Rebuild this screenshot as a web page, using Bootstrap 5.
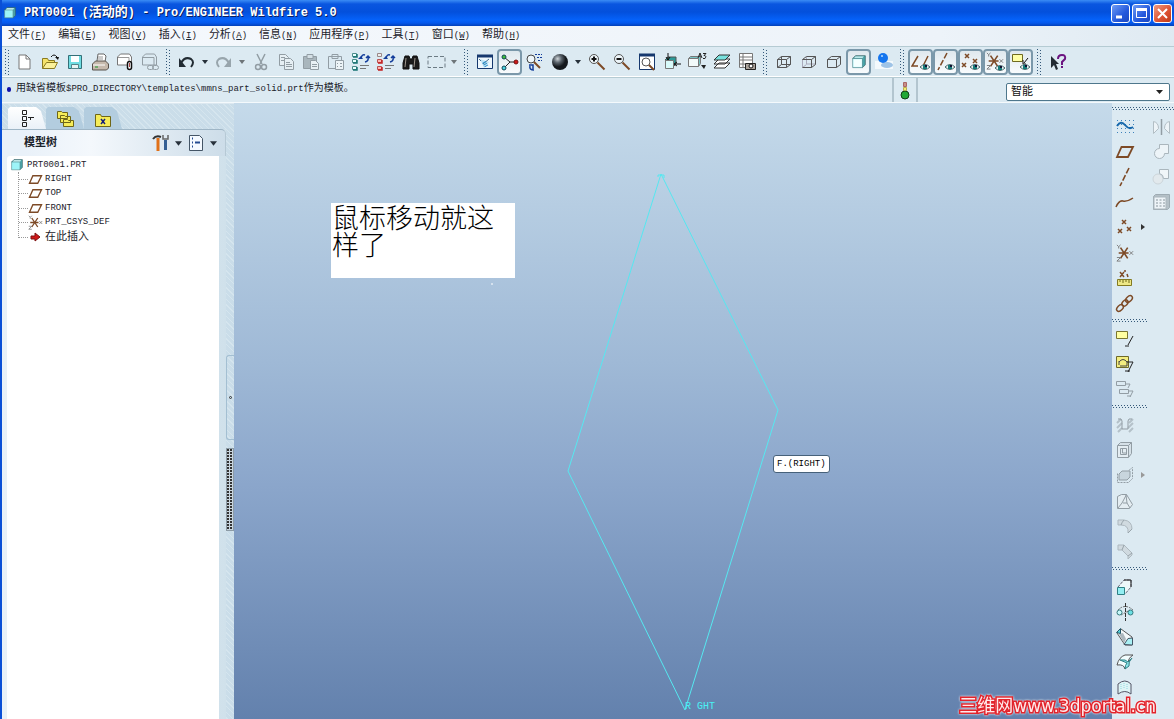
<!DOCTYPE html>
<html lang="zh-CN">
<head>
<meta charset="utf-8">
<meta name="viewport" content="width=device-width, initial-scale=1">
<title>PRT0001 (活动的) - Pro/ENGINEER Wildfire 5.0</title>
<link href="https://cdn.jsdelivr.net/npm/bootstrap@5.3.0/dist/css/bootstrap.min.css" rel="stylesheet">
<style>
:root{--face:#dceaf2;--ink:#1b222a;--brown:#7d4a26;--navy:#16386e;--dim:#9aa6ad}
body{font-family:"Liberation Mono","Noto Sans CJK SC",monospace;font-size:9px;line-height:14px;color:var(--ink);background:var(--face)}
.app{border-left:2px solid #0a4fd6}
.cjk{font-size:11px}
.cjk10{font-size:10px}
.titlebar{height:26px;padding:0 2px;background:linear-gradient(#3b8cf5 0,#0a56e0 4px,#0350dc 12px,#0562fa 20px,#0458ec 23px,#0340b8 26px);color:#fff}
.titlebar h1{font-size:12px;line-height:18px;text-shadow:1px 1px 0 #0a1f60}
.titlebar h1 span{font-size:13px}
.winbtn{width:19px;height:19px;padding:0;border:1px solid #fff;border-radius:3px;background:linear-gradient(135deg,#6f9cf5,#2358dc 60%,#1c48c0)}
.winbtn.closer{background:linear-gradient(135deg,#f09a80,#dc5030 60%,#bc3a18)}
.winbtns{gap:2px}
.winbtn svg,.tb svg,.side svg,.tabbtn svg,.tree svg,.drop svg{display:block}
.menubar{height:20px;padding-left:6px;gap:12px;background:linear-gradient(90deg,#f6f9fd,#edf3f9 80%,#dfeaf2)}
.menubar a{color:var(--ink);text-decoration:none;line-height:18px}
.toolbar{height:32px;border-top:1px solid #b5cbd3;border-bottom:1px solid #b5cbd3;box-shadow:inset 0 -1px #fff;padding-left:2px}
.tb,.drop{border:0;padding:0;background:none;width:25px;height:26px;display:flex;align-items:center;justify-content:center;color:#27303a}
.drop{width:12px}
.tb.on{border:2px solid #7b98aa;border-radius:4px;background:linear-gradient(#dfe8ee,#f8fbfd)}
.grip{width:4px;height:26px;margin:0 4px;background:repeating-linear-gradient(#35597a 0 1px,transparent 1px 3px) 0 0/1px 100% no-repeat,repeating-linear-gradient(transparent 0 1px,#35597a 1px 2px,transparent 2px 3px) 3px 0/1px 100% no-repeat}
.grip.lead-in{margin:0 3px 0 1px}
.msgbar{height:25px;border-bottom:1px solid #f4f9fc}
.msgbar p{padding:4px 0 0 5px}
.bullet{width:4px;height:5px;border-radius:2px;background:#1010a8;margin-right:5px}
.lamp{width:26px;border-left:2px solid #b3c5cf;border-right:2px solid #b3c5cf}
.filterbox{width:164px;height:18px;margin:5px 4px 0 88px;padding:0 20px 0 4px;font-size:11px;line-height:16px;color:#111;border:1px solid #4e778c;border-radius:2px;background-color:#fff;background-size:7px 4px;background-position:right 6px center;background-image:url("data:image/svg+xml,%3Csvg xmlns='http://www.w3.org/2000/svg' viewBox='0 0 7 4'%3E%3Cpath d='M0 0h7L3.500 4z' fill='%23222'/%3E%3C/svg%3E")}
.hatch{background:repeating-linear-gradient(45deg,#cadde9 0 3px,#d5e5ee 3px 4px)}
.treepane{width:232px;border-top:1px solid #dce8f0}
.treecard{width:224px;background:linear-gradient(90deg,#e9f1f8,#d0e1eb)}
.tabs{height:25px;padding:3px 0 0 6px}
.tabbtn{width:38px;height:22px;border:0;padding:0;background:#b3cddf;clip-path:polygon(2px 0,28px 0,33px 4px,38px 22px,0 22px,0 2px);display:flex;align-items:center;justify-content:center}
.tabbtn.cur{background:linear-gradient(#fff,#eaf1f8)}
.paneltop{height:27px;padding:0 6px 0 22px;border-top:1px solid #9fb6c6;border-right:1px solid #b6c9d5;border-top-right-radius:5px;background:linear-gradient(90deg,#e9f1f9 10%,#f4f8fc 40%,#cddde9)}
.paneltop .tb{width:23px}
.tree{background:#fff;margin:0 7px 0 5px;padding:2px 0 0 4px;border-top-left-radius:3px}
.tree ul{margin:0 0 0 7px;padding:0;border-left:1px dotted #999;height:66px}
.tree li{height:14px;display:flex;align-items:center;list-style:none}
.tree li.more{margin-bottom:1px}
.tree li::before{content:"";width:9px;border-top:1px dotted #999}
.tree li span{margin-left:2px}
.splitter{width:8px}
.splitter::before{content:"";height:62px}
.knob{height:85px;border:1px solid #a3bfd2;border-right:0;border-radius:3px 0 0 3px}
.knob i{width:3px;height:3px;border:1px solid #333;border-radius:2px}
.thumb{height:83px;margin-top:8px;border:1px solid #8c9ba6;background:repeating-linear-gradient(90deg,transparent 0 2px,#c9d6df 2px 3px),repeating-linear-gradient(#333 0 2px,#c9d6df 2px 3px)}
.view{background:linear-gradient(#c5daea,#9fb9d6 42%,#8ba6cb 62%,#6381ad)}
.sketch{left:0;top:0}
.note{left:97px;top:100px;width:184px;height:75px;background:#fff;color:#000;font-family:"Noto Sans CJK SC",sans-serif;font-size:27px;font-weight:300;line-height:27px;padding:0 1px}
.tip{left:539px;top:352px;padding:1px 3px;background:#fff;border:1px solid #46617a;border-radius:3px;color:#000}
.axisname{left:451px;top:597px;font-size:10px;color:#4af0f4;white-space:pre}
.side{width:62px}
.hgrip{height:3px;margin:4px 0;background:repeating-linear-gradient(90deg,#35597a 0 1px,transparent 1px 3px) 0 0/100% 1px no-repeat,repeating-linear-gradient(90deg,transparent 0 1px,#35597a 1px 2px,transparent 2px 3px) 0 2px/100% 1px no-repeat}
.side .tb{height:25px}
.side .c1{width:36px}
.side .pt{width:11px}
.mark3d{right:18px;bottom:1px;font-family:"DejaVu Sans","Noto Sans CJK SC",sans-serif;font-size:17px;line-height:24px;color:#ffe9ea;text-decoration:none;-webkit-text-stroke:3px #e2242c;paint-order:stroke fill;filter:drop-shadow(0 0 1px #fff)}
.mark3d span{font-size:18px}
svg{fill:none;stroke:#333}
.br{stroke:var(--brown)}
.gy{stroke:#929da4}
.nv{stroke:#123c9a}
</style>
</head>
<body>
<svg class="d-none">
<symbol id="eye" viewBox="0 0 10 8"><path d="M0 4Q5 -1 10 4Q5 9 0 4z" fill="#e6eeee" stroke="#46666a"/><path d="M3 2h4v4H3z" fill="#157a78" stroke="none"/><path d="M5 2h2v2H5z" fill="#113" stroke="none"/></symbol>
<symbol id="sheet" viewBox="0 0 20 20"><path d="M4 3h7l4 4v10H4z" fill="#fff" stroke="#777"/><path d="M11 3v4h4" stroke="#777"/></symbol>
<symbol id="dn" viewBox="0 0 6 4"><path d="M0 0h6L3 4z" stroke="none" fill="currentColor"/></symbol>
<symbol id="plane" viewBox="0 0 20 20"><path d="M6.500 5h11.500l-5 10h-11z" stroke-width="1.800" stroke="#7d4a26"/></symbol>
<symbol id="csys" viewBox="0 0 20 20"><path d="M3 10h11M5 4l8 12M13 4L5 16" stroke="#7d4a26" stroke-width="1.800"/><path d="M15 8l4 4M19 8l-4 4M1 1l2 2 2-2M3 3v2M1 15h4l-4 4h4" stroke="#777"/></symbol>
<symbol id="cube" viewBox="0 0 20 20"><path d="M1 5l4-4h14v13l-4 4z" fill="#4aa6aa" stroke="#345b60"/><path d="M1 5h14v13H1z" fill="#9df4f8" stroke="#56878c"/><path d="M3 4l2-2h12l-2 2z" fill="#e6ffff" stroke="none"/></symbol>
</svg>
<div class="app vh-100 d-flex flex-column overflow-hidden position-relative">
<header class="titlebar d-flex align-items-center flex-shrink-0">
<svg width="12" height="12"><use href="#cube"/></svg>
<h1 class="m-0 ms-1 ps-1 fw-bold flex-grow-1 text-nowrap">PRT0001 (<span>活动的</span>) - Pro/ENGINEER Wildfire 5.0</h1>
<div class="winbtns d-flex">
<button class="winbtn" aria-label="最小化"><svg width="17" height="17"><path d="M4 12h6" stroke="#fff" stroke-width="3"/></svg></button><button class="winbtn" aria-label="最大化"><svg width="17" height="17"><path d="M3.500 4.500h10v8h-10z" stroke="#fff"/><path d="M3 4.500h11" stroke="#fff" stroke-width="3"/></svg></button><button class="winbtn closer" aria-label="关闭"><svg width="17" height="17"><path d="M4 4l9 9M13 4l-9 9" stroke="#fff" stroke-width="2"/></svg></button>
</div>
</header>
<nav class="menubar d-flex flex-shrink-0 text-nowrap" aria-label="菜单">
<a href="#"><span class="cjk">文件</span>(<u>F</u>)</a><a href="#"><span class="cjk">编辑</span>(<u>E</u>)</a><a href="#"><span class="cjk">视图</span>(<u>V</u>)</a><a href="#"><span class="cjk">插入</span>(<u>I</u>)</a><a href="#"><span class="cjk">分析</span>(<u>A</u>)</a><a href="#"><span class="cjk">信息</span>(<u>N</u>)</a><a href="#"><span class="cjk">应用程序</span>(<u>P</u>)</a><a href="#"><span class="cjk">工具</span>(<u>T</u>)</a><a href="#"><span class="cjk">窗口</span>(<u>W</u>)</a><a href="#"><span class="cjk">帮助</span>(<u>H</u>)</a>
</nav>
<div class="toolbar d-flex align-items-center flex-shrink-0" role="toolbar" aria-label="工具栏">
<div class="grip lead-in"></div>
<div class="d-flex">
<button class="tb" aria-label="新建"><svg width="20" height="20"><use href="#sheet"/></svg></button>
<button class="tb" aria-label="打开"><svg width="20" height="20"><path d="M2.500 16.500v-10h5l1 2h6v3" fill="#f5e36a" stroke="#8a7a20"/><path d="M2.500 16.500l4-6h11l-3 6z" fill="#fbf19a" stroke="#8a7a20"/><path d="M11 5q3-4 6 0" stroke="#111"/><path d="M15 5h4l-1 3z" fill="#111" stroke="none"/></svg></button>
<button class="tb" aria-label="保存"><svg width="20" height="20"><path d="M3.500 3.500h13v13h-13z" fill="#6fdde2" stroke="#347078"/><path d="M6 4h8v6H6z" fill="#fff" stroke="none"/><path d="M6.500 12.500h7v4h-7z" fill="#e8f4f4" stroke="#55858a"/></svg></button>
<button class="tb" aria-label="打印"><svg width="20" height="20"><path d="M7 9l1-7h6l2 2-1 6" fill="#fff" stroke="#666"/><path d="M2.500 12l3-3h10l3 3v4l-2 2h-14z" fill="#c6b9ac" stroke="#57504a"/><path d="M3 13h12" stroke="#fff"/><path d="M5 15h3" stroke="#1a9a2a"/><path d="M8 5h5M8 7h5" stroke="#999"/></svg></button>
<button class="tb" aria-label="发送"><svg width="20" height="20"><path d="M2.500 5l3-3h9l2 3v8h-14z" fill="#fff" stroke="#777"/><path d="M3 5.500h11v8" stroke="#999"/><rect x="12.500" y="9.500" width="4" height="8" rx="2" fill="#fff" stroke="#111" stroke-width="1.500"/><path d="M14.500 11v4" stroke="#a44"/></svg></button>
<button class="tb" aria-label="链接"><svg width="20" height="20" class="gy"><path d="M2.500 5l3-3h9l2 3v8h-14z"/><path d="M3 5.500h11v8"/><rect x="7.500" y="13.500" width="6" height="4" rx="2"/><rect x="12.500" y="13.500" width="6" height="4" rx="2"/></svg></button>
</div>
<div class="grip"></div>
<div class="d-flex">
<button class="tb" aria-label="撤消"><svg width="20" height="20"><path d="M4 11Q8 4 14 7Q18 10 14 15" stroke="#222b33" stroke-width="2"/><path d="M2 6v9h7z" fill="#222b33" stroke="none"/></svg></button>
<button class="drop" aria-label="撤消列表"><svg width="6" height="4"><use href="#dn"/></svg></button>
<button class="tb" aria-label="重做"><svg width="20" height="20"><path d="M15 11Q11 4 5 7Q1 10 5 15" stroke="#98a5ac" stroke-width="2"/><path d="M17 6v9h-7z" fill="#98a5ac" stroke="none"/></svg></button>
<button class="drop text-black-50" aria-label="重做列表"><svg width="6" height="4"><use href="#dn"/></svg></button>
<button class="tb" aria-label="剪切"><svg width="20" height="20" class="gy" stroke-width="1.500"><path d="M6 2l5 10M14 2L9 12"/><circle cx="7" cy="15" r="2.500"/><circle cx="13" cy="15" r="2.500"/></svg></button>
<button class="tb" aria-label="复制"><svg width="20" height="20" class="gy"><path d="M3.500 2.500h6l3 3v8h-9z" fill="#e6eff4"/><path d="M8.500 6.500h6l3 3v8h-9z" fill="#e6eff4"/><path d="M5 5.500h4M5 8.500h3M10 10.500h4M10 12.500h6M10 14.500h6"/></svg></button>
<button class="tb" aria-label="粘贴"><svg width="20" height="20" class="gy"><path d="M2.500 4.500h13v12h-13z" fill="#a9b6bd"/><path d="M6 2.500h6v4H6z" fill="#d4dfe5"/><path d="M9.500 8.500h5l3 3v6h-8z" fill="#e9f1f5"/><path d="M11 12.500h5M11 14.500h5"/></svg></button>
<button class="tb" aria-label="选择性粘贴"><svg width="20" height="20" class="gy"><path d="M2.500 4.500h13v12h-13zM6 2.500h6v4H6z"/><path d="M9.500 8.500h8v9h-8z" fill="#edf4f7"/><path d="M11 11.500h1M14 11.500h2M11 14.500h1M14 14.500h2"/></svg></button>
<button class="tb" aria-label="再生"><svg width="20" height="20"><path d="M1.500 1.500h4v3h-4zM1.500 7.500h4v3h-4zM1.500 14.500h4v3h-4z" fill="#eaffff" stroke="#4a8a8a"/><path d="M2 5h4v-3M2 11h4v-3M2 18h4v-3" stroke="#187474" stroke-width="1.500"/><path d="M7 7h5l-2-3z" fill="#123c9a" stroke="none"/><path d="M10 6q1-4 4-3M17 5q1 4-3 5M15 6l2-2 2 2" class="nv" stroke-width="1.500"/><path d="M9 13.500h9M9 16.500h6" stroke="#777"/></svg></button>
<button class="tb" aria-label="再生管理器"><svg width="20" height="20"><path d="M1.500 1.500h4v3h-4z" fill="#eee" stroke="#988"/><path d="M1.500 7.500h4v3h-4zM1.500 14.500h4v3h-4z" fill="#ffb4b0" stroke="#b85050"/><path d="M2 11h4v-3M2 18h4v-3" stroke="#c42222" stroke-width="1.500"/><path d="M7 7h5l-2-3z" fill="#123c9a" stroke="none"/><path d="M10 6q1-4 4-3M17 5q1 4-3 5M15 6l2-2 2 2" class="nv" stroke-width="1.500"/><path d="M9 13.500h9M9 16.500h6" stroke="#777"/></svg></button>
<button class="tb" aria-label="查找"><svg width="20" height="20"><path d="M4 4h4l1 3h2l1-3h4l2 7v6h-6v-5H8v5H2v-6z" fill="#1b1b1b" stroke="#111"/><path d="M5 6l-1 9M14 6l-1 9" stroke="#9d968e"/></svg></button>
<button class="tb" aria-label="框选"><svg width="20" height="20"><path d="M2 4.500h17v11H2z" stroke="#6c7b84" stroke-dasharray="4 2"/></svg></button>
<button class="drop text-black-50" aria-label="选取方式"><svg width="6" height="4"><use href="#dn"/></svg></button>
</div>
<div class="grip"></div>
<div class="d-flex">
<button class="tb" aria-label="重画"><svg width="20" height="20"><path d="M2.500 3.500h15v13h-15z" fill="#eef7fc" stroke="#16386e"/><path d="M2 4h16" stroke="#16386e" stroke-width="3"/><path d="M5 7l9 3-5 6z" fill="#bfe2f4" stroke="none"/><path d="M4 7l2 2M8 12l6-5" stroke="#456f90"/><path d="M9 10l3 5" stroke="#2a8fca" stroke-dasharray="1 1" stroke-width="4"/></svg></button>
<button class="tb on" aria-label="旋转中心"><svg width="20" height="20"><path d="M4 5l6 5h6M10 10l-6 6" stroke="#222"/><circle cx="4" cy="5" r="2" fill="#3fc03a" stroke="#145"/><circle cx="4" cy="16" r="2" fill="#4fd6e2" stroke="#145"/><circle cx="16" cy="10" r="2" fill="#cf1818" stroke="#711"/></svg></button>
<button class="tb" aria-label="定向模式"><svg width="20" height="20"><circle cx="6" cy="7" r="4" fill="#eef6fa" stroke="#444"/><path d="M9 10l6 6" stroke="#7d4a26" stroke-width="2"/><path d="M10 2.500h7M12 5.500h5M13 8.500h4" stroke="#123c9a" stroke-dasharray="2 1"/><path d="M5 14q-1 4 4 4M8 17v-4H4" class="nv" stroke-width="1.500"/></svg></button>
<button class="tb" aria-label="外观"><svg width="20" height="20"><defs><radialGradient id="ball" cx=".35" cy=".3"><stop stop-color="#cfd5d9"/><stop offset=".5" stop-color="#59626a"/><stop offset="1" stop-color="#15191d"/></radialGradient></defs><circle cx="10" cy="10" r="8" fill="url(#ball)" stroke="none"/></svg></button>
<button class="drop" aria-label="外观库"><svg width="6" height="4"><use href="#dn"/></svg></button>
<button class="tb" aria-label="放大"><svg width="20" height="20"><circle cx="7" cy="7" r="4.500" fill="#edf5f9" stroke="#555"/><path d="M4.500 7h5M7 4.500v5" stroke="#111" stroke-width="2"/><path d="M10.500 10.500l7 7" stroke="#7d4a26" stroke-width="2"/></svg></button>
<button class="tb" aria-label="缩小"><svg width="20" height="20"><circle cx="7" cy="7" r="4.500" fill="#edf5f9" stroke="#555"/><path d="M4.500 7h5" stroke="#111" stroke-width="2"/><path d="M10.500 10.500l7 7" stroke="#7d4a26" stroke-width="2"/></svg></button>
<button class="tb" aria-label="重新调整"><svg width="20" height="20"><path d="M2.500 2.500h15v15h-15z" fill="#fff" stroke="#16386e"/><path d="M2 3h16" stroke="#16386e" stroke-width="3"/><circle cx="9" cy="10" r="4" stroke="#555"/><path d="M12 13l5 5" stroke="#7d4a26" stroke-width="2"/></svg></button>
<button class="tb" aria-label="重定向"><svg width="20" height="20"><path d="M3 8l3-3h8v7l-3 3z" fill="#2c9a98" stroke="#555"/><path d="M3.500 8.500h8v8h-8z" fill="#d8fafa" stroke="#777"/><path d="M6 1v7M4 5l2 3 2-3M19 12h-6M15 10l-3 2 3 2" stroke="#111"/></svg></button>
<button class="tb" aria-label="已保存视图"><svg width="20" height="20"><path d="M1.500 6.500l2-2h10v7l-2 3" fill="#79c4c4" stroke="#777"/><path d="M1.500 6.500h10v8h-10z" fill="#f2fafa" stroke="#777"/><path d="M11 6l2-5 2 5M12 4h2M16 1.500h3l-2 2q3 0 1 3h-2" stroke="#222"/><path d="M14 13h5l-2 4z" fill="#222" stroke="none"/></svg></button>
<button class="tb" aria-label="层"><svg width="20" height="20"><path d="M2 16l5-5h11l-5 5zM2 12l5-5h11l-5 5z" fill="#fff" stroke="#333"/><path d="M2 8l5-5h11l-5 5z" fill="#78e0dc" stroke="#333"/></svg></button>
<button class="tb" aria-label="视图管理器"><svg width="20" height="20"><path d="M2.500 1.500h13v14h-13zM2 5h13M2 8h13M2 12h13M6 2v13" fill="#fff" stroke="#777"/><path d="M8.500 11.500h10v6h-10z" fill="#aaa29a" stroke="#222"/><circle cx="14" cy="14" r="2" fill="#fff" stroke="#111"/></svg></button>
</div>
<div class="grip"></div>
<div class="d-flex">
<button class="tb" aria-label="线框"><svg width="20" height="20"><path d="M3.500 7.500h9v8h-9zM7.500 4.500h9v8h-9zM3.500 7.500l4-3M12.500 7.500l4-3M12.500 15.500l4-3M3.500 15.500l4-3" stroke="#555"/></svg></button>
<button class="tb" aria-label="隐藏线"><svg width="20" height="20"><path d="M7.500 5v7h9M7.500 12.500l-4 3M3.500 7.500v8" stroke="#aab"/><path d="M3.500 7.500h9v8h-9M3.500 7.500l4-3h9v8l-4 3M12.500 7.500l4-3" stroke="#555"/></svg></button>
<button class="tb" aria-label="消隐"><svg width="20" height="20"><path d="M3.500 7.500h9v8h-9zM3.500 7.500l4-3h9v8l-4 3M12.500 7.500l4-3" stroke="#555"/></svg></button>
<button class="tb on" aria-label="着色"><svg width="14" height="14" viewBox="0 0 20 20"><use href="#cube"/><path d="M2 6h12v11H2z" fill="#f4ffff" stroke="none"/></svg></button>
<button class="tb" aria-label="增强真实感"><svg width="20" height="20"><path d="M1 9h18v8H1z" fill="#f4f9fc" stroke="none"/><ellipse cx="13" cy="13" rx="6" ry="3" fill="#9ec3e6" stroke="none"/><circle cx="9" cy="6" r="5" fill="#1475ee" stroke="none"/><circle cx="8" cy="4" r="1" fill="#b8dcff" stroke="none"/></svg></button>
</div>
<div class="grip"></div>
<div class="d-flex">
<button class="tb on" aria-label="基准平面显示"><svg width="20" height="20"><path d="M7 4L1 14h6M17 4l-5 10" class="br" stroke-width="1.500"/><use href="#eye" x="9" y="11" width="10" height="8"/></svg></button>
<button class="tb on" aria-label="基准轴显示"><svg width="20" height="20"><path d="M11 1L2 18" class="br" stroke-width="1.500" stroke-dasharray="6 2"/><use href="#eye" x="9" y="11" width="10" height="8"/></svg></button>
<button class="tb on" aria-label="基准点显示"><svg width="20" height="20"><path d="M4 2l4 4M8 2L4 6M1 11l4 4M5 11l-4 4M12 7l4 4M16 7l-4 4" class="br" stroke-width="1.500"/><use href="#eye" x="9" y="11" width="10" height="8"/></svg></button>
<button class="tb on" aria-label="坐标系显示"><svg width="20" height="20"><use href="#csys" width="18" height="18"/><use href="#eye" x="9" y="12" width="10" height="8"/></svg></button>
<button class="tb on" aria-label="注释显示"><svg width="20" height="20"><path d="M1.500 2.500h10v7h-10z" fill="#ffffa6" stroke="#6f6a20"/><path d="M17 6l-4 5M12 8v4h3" stroke="#111"/><use href="#eye" x="9" y="11" width="10" height="8"/></svg></button>
</div>
<div class="grip"></div>
<button class="tb" aria-label="帮助"><svg width="20" height="20"><path d="M3 4v12l3-3 2 5 2-1-2-5h3z" fill="#222b33" stroke="none"/><path d="M10 7q0-4 4-4t3 4l-3 3v3M14 14v2" stroke="#6b1480" stroke-width="2"/></svg></button>
</div>
<div class="msgbar d-flex flex-shrink-0">
<p class="m-0 d-flex align-items-center flex-grow-1 align-self-start text-nowrap"><i class="bullet"></i><span><span class="cjk10">用缺省模板</span>$PRO_DIRECTORY\templates\mmns_part_solid.prt<span class="cjk10">作为模板。</span></span></p>
<div class="lamp d-flex align-items-center justify-content-center"><svg width="12" height="20"><path d="M4.500 2.500h3v4h-3z" fill="#c88f88" stroke="#a66"/><path d="M4.500 7.500h3v4h-3z" fill="#f4ec70" stroke="#b8ae50"/><circle cx="6" cy="15" r="4" fill="#22a836" stroke="#123f18"/></svg></div>
<select class="form-select filterbox" aria-label="选取过滤器"><option>智能</option></select>
</div>
<main class="d-flex flex-grow-1 overflow-hidden">
<aside class="treepane hatch d-flex flex-shrink-0">
<div class="d-flex flex-column flex-grow-1">
<div class="tabs d-flex">
<button class="tabbtn cur" aria-label="模型树"><svg width="18" height="20"><path d="M4.500 2.500h4v4h-4zM4.500 8.500h4v4h-4zM4.500 14.500h4v4h-4zM10 9.500h6M12.500 9v3" stroke="#222"/></svg></button>
<button class="tabbtn" aria-label="文件夹浏览器"><svg width="19" height="20"><path d="M1.500 3.500h4l1 1h5v6h-10zM4.500 7.500h4l1 1h5v6h-10zM7.500 11.500h4l1 1h5v6h-10z" fill="#f6ec58" stroke="#6f6618"/></svg></button>
<button class="tabbtn" aria-label="收藏夹"><svg width="18" height="20"><path d="M1.500 6.500h5l1 2h9v10h-15z" fill="#f6ec58" stroke="#6f6618"/><path d="M7 11l4 5M11 11l-4 5" stroke="#16207a" stroke-width="1.500"/></svg></button>
</div>
<div class="treecard d-flex flex-column flex-grow-1">
<div class="paneltop d-flex align-items-center">
<strong class="cjk flex-grow-1">模型树</strong>
<button class="tb" aria-label="设置"><svg width="18" height="20"><path d="M1 6q3-4 8-2" stroke="#333" stroke-width="2"/><path d="M6 5v13" stroke="#e07018" stroke-width="3"/><path d="M11 2v4h5V2" stroke="#666" stroke-width="1.500"/><path d="M13.500 7v10" stroke="#345f94" stroke-width="3"/></svg></button><button class="drop" aria-label="设置列表"><svg width="7" height="5"><use href="#dn"/></svg></button>
<button class="tb" aria-label="显示"><svg width="18" height="20"><path d="M2.500 2.500h10l3 3v12h-13z" fill="#f4f9ff" stroke="#456"/><path d="M5 5.500h1M5 9.500h1M8 9.500h5M5 13.500h1" stroke="#234a90" stroke-width="2"/></svg></button><button class="drop" aria-label="显示列表"><svg width="7" height="5"><use href="#dn"/></svg></button>
</div>
<div class="tree flex-grow-1">
<div class="d-flex align-items-center gap-1"><svg width="12" height="12"><use href="#cube"/></svg><span>PRT0001.PRT</span></div>
<ul>
<li><svg width="15" height="15"><use href="#plane"/></svg><span>RIGHT</span></li>
<li class="more"><svg width="15" height="15"><use href="#plane"/></svg><span>TOP</span></li>
<li><svg width="15" height="15"><use href="#plane"/></svg><span>FRONT</span></li>
<li class="more"><svg width="15" height="15"><use href="#csys"/></svg><span>PRT_CSYS_DEF</span></li>
<li><svg width="15" height="14"><path d="M3 6h4V3l5 4-5 4V9H3z" fill="#d01818" stroke="#7d1010"/></svg><span class="cjk">在此插入</span></li>
</ul>
</div>
</div>
</div>
<div class="splitter d-flex flex-column justify-content-center"><div class="knob d-flex align-items-center justify-content-center"><i></i></div><div class="thumb"></div></div>
</aside>
<section class="view position-relative flex-grow-1 overflow-hidden" aria-label="图形窗口">
<svg class="sketch position-absolute" width="878" height="616"><path d="M427 71L544 307L451 607L334 368z" stroke="#55e8f0"/><path d="M424 74v-2h6v3" stroke="#55e8f0"/><path d="M257 181h2" stroke="#fff"/></svg>
<div class="note position-absolute">鼠标移动就这样了</div>
<div class="tip position-absolute">F.(RIGHT)</div>
<div class="axisname position-absolute">R GHT</div>
</section>
<aside class="side flex-shrink-0" role="toolbar" aria-label="特征工具栏">
<div class="hgrip"></div>
<div class="d-flex">
<div class="c1 flex-shrink-0">
<button class="tb" aria-label="草绘"><svg width="20" height="20"><path d="M2 3.500h17M2 7.500h17M2 11.500h17M2 15.500h17" stroke="#3d82bb" stroke-dasharray="1 3"/><path d="M2 9q4-6 8-1t8 2" stroke="#1668ac" stroke-width="2"/></svg></button>
<button class="tb" aria-label="平面"><svg width="20" height="20"><use href="#plane"/></svg></button>
<button class="tb" aria-label="轴"><svg width="20" height="20"><path d="M14 1L5 19" class="br" stroke-width="1.600" stroke-dasharray="6 2"/></svg></button>
<button class="tb" aria-label="曲线"><svg width="20" height="20"><path d="M1 15Q4 8 8 9t10-3" class="br" stroke-width="1.500"/></svg></button>
<div class="d-flex"><button class="tb flex-shrink-0" aria-label="点"><svg width="20" height="20"><path d="M7 3l4 4M11 3L7 7M3 12l4 4M7 12l-4 4M12 10l4 4M16 10l-4 4" class="br" stroke-width="1.500"/></svg></button><button class="drop pt flex-shrink-0" aria-label="更多点"><svg width="4" height="6"><path d="M0 0l4 3-4 3z" fill="#333" stroke="none"/></svg></button></div>
<button class="tb" aria-label="坐标系"><svg width="18" height="18"><use href="#csys"/></svg></button>
<button class="tb" aria-label="分析"><svg width="20" height="20"><path d="M5 4l4 5M9 4L5 9M10 2v2M12 6l1 3" class="br" stroke-width="1.500"/><path d="M2.500 11.500h14v6h-14z" fill="#eee886" stroke="#837a22"/><path d="M5 12v2M8 12v3M11 12v2M14 12v3" stroke="#6f6818"/></svg></button>
<button class="tb" aria-label="参照"><svg width="20" height="20" class="br" stroke-width="1.500"><ellipse cx="14" cy="6" rx="4" ry="2.500" transform="rotate(-45 14 6)"/><ellipse cx="10" cy="10" rx="3.500" ry="2.500" transform="rotate(-45 10 10)"/><ellipse cx="5" cy="15" rx="4" ry="2.500" transform="rotate(-45 5 15)"/></svg></button>
<div class="hgrip"></div>
<button class="tb" aria-label="注释"><svg width="20" height="20"><path d="M1.500 2.500h11v7h-11z" fill="#ffffa0" stroke="#7a7630"/><path d="M18 7l-5 9M10 17h4" stroke="#222"/></svg></button>
<button class="tb" aria-label="传播注释"><svg width="20" height="20"><path d="M1.500 2.500h12v11h-12z" fill="#f4ee80" stroke="#6f6a28"/><path d="M4 8q4-5 8 0M4 11V7M12 7v5H5" stroke="#444"/><path d="M12 8h6l-5 10M10 17h5" stroke="#222"/></svg></button>
<button class="tb" aria-label="注释元素"><svg width="20" height="20" class="gy"><path d="M1.500 2.500h9v4h-9zM4.500 10.500h9v4h-9zM11 5h4l-2 4M14 12h4l-3 6M12 17h4"/></svg></button>
<div class="hgrip"></div>
<button class="tb" aria-label="孔"><svg width="20" height="20"><path d="M2 8l4-4M2 13l5-5M3 17l4-4M14 8l4-4M13 13l5-5M14 17l4-4" stroke="#b4c1c9" stroke-width="2"/><path d="M3 4h3l1 2v8h6V6l1-2h3" class="gy"/></svg></button>
<button class="tb" aria-label="壳"><svg width="20" height="20" class="gy"><path d="M2.500 5.500l3-3h11v11l-3 4" fill="#d6e1e8"/><path d="M2.500 5.500h11v12h-11z" fill="#e4edf2"/><path d="M5.500 8.500h6v6h-6zM13.500 5.500l3-3M7.500 8v5h4"/></svg></button>
<div class="d-flex"><button class="tb flex-shrink-0" aria-label="筋"><svg width="20" height="20" class="gy"><path d="M2.500 8.500v9h11l4-4v-11l-5 4" stroke-dasharray="2 1"/><path d="M4 9l3-3h8v6l-3 3H4z" fill="#c8d5dd"/></svg></button><button class="drop pt flex-shrink-0" aria-label="更多筋"><svg width="4" height="6"><path d="M0 0l4 3-4 3z" fill="#999" stroke="none"/></svg></button></div>
<button class="tb" aria-label="拔模"><svg width="20" height="20" class="gy"><path d="M2.500 5.500l4-2h5l6 10-3 4h-12z" fill="#e4edf2"/><path d="M11.500 3.500L7 12l-4 5M8 12h4l3 5M11 4l1 8"/></svg></button>
<button class="tb" aria-label="倒圆角"><svg width="20" height="20"><path d="M3 4h6q8 1 8 9l-4 4q1-8-7-8H3z" fill="#d0dae0" stroke="#adb8bf"/><path d="M9 4q-2 2-3 5M17 13l-4 4" stroke="#98a4ab"/></svg></button>
<button class="tb" aria-label="倒角"><svg width="20" height="20"><path d="M3 4h6l8 8v2l-4 4v-3L7 9H3z" fill="#d0dae0" stroke="#adb8bf"/><path d="M9 4L7 9M17 12l-4 3" stroke="#98a4ab"/></svg></button>
<div class="hgrip"></div>
<button class="tb" aria-label="拉伸"><svg width="20" height="20"><path d="M3 10l6-7h7v7l-6 7" stroke="#667" stroke-dasharray="3 1" fill="#edf8fa"/><path d="M9 3h7v7" stroke="#222"/><path d="M2.500 10.500h7v7h-7z" fill="#93eef2" stroke="#2f8085"/></svg></button>
<button class="tb" aria-label="旋转"><svg width="20" height="20"><path d="M10.500 1v18" stroke="#333" stroke-dasharray="4 1"/><path d="M3 8q7-7 15 0M6 13l9-5" stroke="#666" stroke-dasharray="2 1"/><circle cx="4.500" cy="10.500" r="2.500" fill="#c8f8fa" stroke="#34787d"/><circle cx="15.500" cy="10.500" r="2.500" fill="#6ce0e4" stroke="#34787d"/></svg></button>
<button class="tb" aria-label="扫描混合"><svg width="20" height="20"><path d="M6 2l11 8v8H10L2 6z" fill="#f4f8fa" stroke="#555"/><path d="M4 7l4-1 3 6-2 4z" fill="#adb7bd" stroke="none"/><path d="M1.500 5.500l4-4v5z" fill="#56d2da" stroke="#256"/><path d="M9 17.500l4-6 4.500-.5v7z" fill="#a9f0f4" stroke="#456"/></svg></button>
<button class="tb" aria-label="边界混合"><svg width="20" height="20"><path d="M2 13Q4 5 10 3h8q-5 3-5 9l-3 5q-1-5-8-4z" fill="#f2fdfe" stroke="#555"/><path d="M5 8q6-1 8 2l4-4q-4 4-3 8l-4 3q0-4 2-6z" fill="#86e4e8" stroke="#2f8085"/></svg></button>
<button class="tb" aria-label="造型"><svg width="20" height="20"><path d="M3 7q7-6 13 0v10q-6-5-13 0z" fill="#def4f6" stroke="#556"/><path d="M6 7v6M9 6v6M12 7v6" stroke="#8edade" stroke-dasharray="1 1"/></svg></button>
</div>
<div>
<button class="tb" aria-label="镜像"><svg width="18" height="20" class="gy"><path d="M9.500 2v16" stroke-width="1.500"/><path d="M1.500 4.500q5 1 5 7l-5 5zM17.500 4.500q-5 1-5 7l5 5z" fill="#edf4f8" stroke="#b2bec5"/></svg></button>
<button class="tb" aria-label="合并"><svg width="20" height="20"><path d="M8.500 2.500h9v9h-4a5 5 0 1 1-5-5z" fill="#edf4f8" stroke="#aab6bd"/></svg></button>
<button class="tb" aria-label="修剪"><svg width="20" height="20"><circle cx="7" cy="12" r="5" fill="#e2e9ed" stroke="#ccd5da"/><path d="M8.500 2.500h9v9h-5q0-4-4-5z" fill="#f0f6f9" stroke="#aab6bd"/></svg></button>
<button class="tb" aria-label="阵列"><svg width="20" height="20"><path d="M2.500 4.500l2-2h14v13l-2 2h-14z" fill="#b4c0c7" stroke="#9eabb3"/><path d="M3 5h12v12H3z" fill="#eef4f8" stroke="#aab6bd"/><path d="M5 8h9M5 11h9M5 14h9" stroke="#88959d" stroke-dasharray="2 1.500"/></svg></button>
</div>
</div>
</aside>
</main>
<a class="mark3d position-absolute text-nowrap" href="#"><span>三维网</span>www.3dportal.cn</a>
</div>
<script src="https://cdn.jsdelivr.net/npm/bootstrap@5.3.0/dist/js/bootstrap.bundle.min.js"></script>
</body>
</html>
